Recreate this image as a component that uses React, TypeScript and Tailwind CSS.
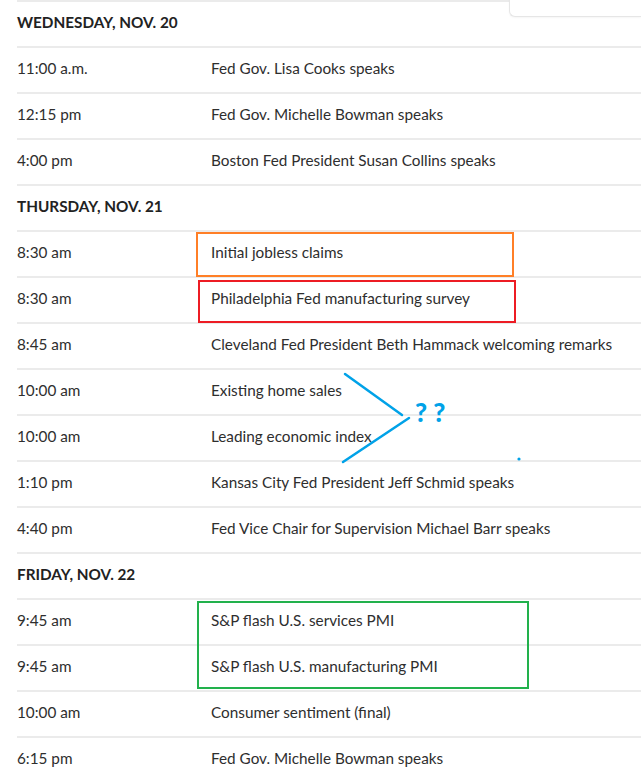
import React from 'react';

type Row = { kind: 'day'; label: string } | { kind: 'event'; time: string; text: string };

const rows: Row[] = [
  { kind: 'day', label: 'WEDNESDAY, NOV. 20' },
  { kind: 'event', time: '11:00 a.m.', text: 'Fed Gov. Lisa Cooks speaks' },
  { kind: 'event', time: '12:15 pm', text: 'Fed Gov. Michelle Bowman speaks' },
  { kind: 'event', time: '4:00 pm', text: 'Boston Fed President Susan Collins speaks' },
  { kind: 'day', label: 'THURSDAY, NOV. 21' },
  { kind: 'event', time: '8:30 am', text: 'Initial jobless claims' },
  { kind: 'event', time: '8:30 am', text: 'Philadelphia Fed manufacturing survey' },
  { kind: 'event', time: '8:45 am', text: 'Cleveland Fed President Beth Hammack welcoming remarks' },
  { kind: 'event', time: '10:00 am', text: 'Existing home sales' },
  { kind: 'event', time: '10:00 am', text: 'Leading economic index' },
  { kind: 'event', time: '1:10 pm', text: 'Kansas City Fed President Jeff Schmid speaks' },
  { kind: 'event', time: '4:40 pm', text: 'Fed Vice Chair for Supervision Michael Barr speaks' },
  { kind: 'day', label: 'FRIDAY, NOV. 22' },
  { kind: 'event', time: '9:45 am', text: 'S&P flash U.S. services PMI' },
  { kind: 'event', time: '9:45 am', text: 'S&P flash U.S. manufacturing PMI' },
  { kind: 'event', time: '10:00 am', text: 'Consumer sentiment (final)' },
  { kind: 'event', time: '6:15 pm', text: 'Fed Gov. Michelle Bowman speaks' },
];

export default function App() {
  return (
    <div className="relative h-[771px] w-[641px] overflow-hidden bg-white font-['Lato','Liberation_Sans',sans-serif] text-[15.3px] text-[#2e2e2e]">
      <div className="pl-[17px]">
        {rows.map((row, i) =>
          row.kind === 'day' ? (
            <div key={i} className="flex h-[46px] items-center border-t-2 border-[#ebebeb] pb-[3px]">
              <span className="font-bold text-[#222]">{row.label}</span>
            </div>
          ) : (
            <div key={i} className="flex h-[46px] items-center border-t-2 border-[#ebebeb] pb-[3px]">
              <span className="w-[194px] shrink-0">{row.time}</span>
              <span>{row.text}</span>
            </div>
          )
        )}
      </div>

      {/* card peeking in at the top right */}
      <div className="absolute right-0 top-[-2px] h-[19px] w-[132px] rounded-bl-[6px] border-b border-l border-[#e6e6e6] bg-white shadow-[0_1px_2px_rgba(0,0,0,0.04)]" />

      {/* annotations */}
      <div className="absolute left-[196px] top-[232px] h-[45px] w-[318px] border-2 border-[#ff7f27]" />
      <div className="absolute left-[198px] top-[280px] h-[43px] w-[318px] border-2 border-[#ed1c24]" />
      <div className="absolute left-[197px] top-[601px] h-[88px] w-[332px] border-2 border-[#22b14c]" />

      <svg className="absolute left-0 top-0" width="641" height="771">
        <line x1="345" y1="374" x2="402" y2="415" stroke="#00a2e8" strokeWidth="2.5" strokeLinecap="round" />
        <line x1="409" y1="418" x2="343" y2="462" stroke="#00a2e8" strokeWidth="2.5" strokeLinecap="round" />
        <circle cx="519" cy="459" r="1.6" fill="#00a2e8" />
      </svg>
      <div className="absolute left-[415px] top-[399px] text-[26px] font-black leading-none text-[#00a2e8]">
        ? ?
      </div>
    </div>
  );
}
